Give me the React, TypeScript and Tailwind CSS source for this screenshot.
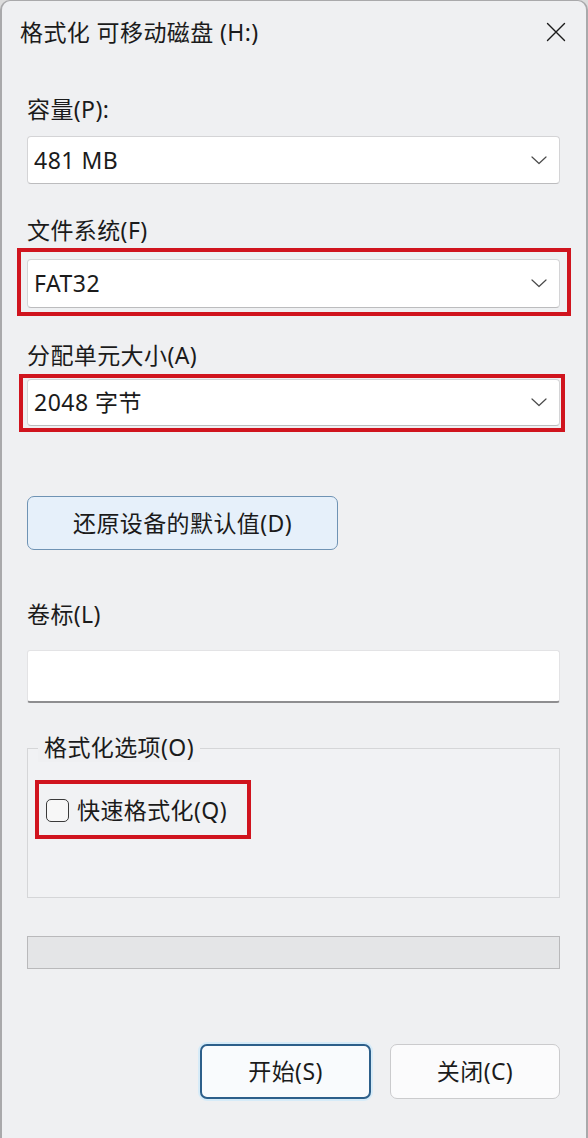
import React from 'react';

const font = "font-['Segoe_UI','Noto_Sans','Noto_Sans_CJK_SC',sans-serif]";

function Chevron() {
  return (
    <svg width="16" height="9" viewBox="0 0 16 9" fill="none" className="shrink-0">
      <path d="M1 1l7 6.5L15 1" stroke="#4a4a4a" strokeWidth="1.2" strokeLinecap="round" strokeLinejoin="round" />
    </svg>
  );
}

function Select({ value, h }: { value: string; h: string }) {
  return (
    <div className={`flex items-center justify-between ${h} rounded-[4px] border border-[#d4d4d6] border-b-[#bcbcbe] bg-white pl-[6px] pr-[12px]`}>
      <span className="text-[23px] tracking-[0.5px] text-[#1b1b1b]">{value}</span>
      <Chevron />
    </div>
  );
}

function Label({ children }: { children: React.ReactNode }) {
  return <div className="h-[30px] text-[23px] leading-[30px] tracking-[0.4px] text-[#1b1b1b]">{children}</div>;
}

export default function App() {
  return (
    <div className={`${font} h-[1138px] w-[588px] overflow-hidden bg-[#dcdcdc]`}>
      <div className="h-full rounded-t-[10px] border-l-2 border-r-2 border-t border-[#a9a9ab] bg-[#eff0f2]">
        {/* title bar */}
        <div className="flex h-[62px] items-center justify-between pl-[18px] pr-[20px]">
          <span className="text-[23px] tracking-[0.4px] text-[#1b1b1b]">格式化 可移动磁盘 (H:)</span>
          <svg width="20" height="20" viewBox="0 0 20 20" fill="none">
            <path d="M1.5 1.5l17 17M18.5 1.5l-17 17" stroke="#1b1b1b" strokeWidth="1.4" strokeLinecap="round" />
          </svg>
        </div>

        <div className="pl-[25px] pr-[26px]">
          <div className="mt-[31px]">
            <Label>容量(P):</Label>
          </div>
          <div className="mt-[12px]">
            <Select value="481 MB" h="h-[48px]" />
          </div>

          <div className="mt-[31px]">
            <Label>文件系统(F)</Label>
          </div>
          <div className="relative mt-[14px]">
            <Select value="FAT32" h="h-[49px]" />
            <div className="pointer-events-none absolute -bottom-[8px] -left-[10px] -right-[11px] -top-[11px] border-[4px] border-[#d0141e]" />
          </div>

          <div className="mt-[32px]">
            <Label>分配单元大小(A)</Label>
          </div>
          <div className="relative mt-[9px]">
            <Select value="2048 字节" h="h-[47px]" />
            <div className="pointer-events-none absolute -bottom-[6px] -left-[8px] -right-[5px] -top-[5px] border-[4px] border-[#d0141e]" />
          </div>

          <button className="mt-[70px] flex h-[54px] w-[311px] items-center justify-center rounded-[7px] border border-[#6f93b4] bg-[#e6f0fa] text-[23px] tracking-[0.4px] text-[#1b1b1b]">
            还原设备的默认值(D)
          </button>

          <div className="mt-[49px]">
            <Label>卷标(L)</Label>
          </div>
          <div className="mt-[21px] h-[53px] rounded-[3px] border border-[#e3e3e5] border-b-2 border-b-[#8e8e90] bg-white" />

          <div className="relative mt-[45px] h-[150px] border border-[#d5d6d8] bg-[#f1f2f4]">
            <span className="absolute -top-[17px] left-[10px] bg-[#eff0f2] px-[6px] text-[23px] leading-[30px] tracking-[0.4px] text-[#1b1b1b]">格式化选项(O)</span>
            <div className="relative ml-[18px] mt-[47px] flex items-center gap-[8px]">
              <span className="h-[23px] w-[23px] rounded-[5px] border-[1.5px] border-[#3a3a3a] bg-[#f7f7f7]" />
              <span className="text-[23px] leading-[28px] tracking-[0.4px] text-[#1b1b1b]">快速格式化(Q)</span>
              <div className="pointer-events-none absolute -bottom-[15px] -left-[11px] -top-[16px] w-[216px] border-[4px] border-[#d0141e]" />
            </div>
          </div>

          <div className="mt-[38px] h-[33px] border border-[#b9b9bb] bg-[#e4e5e7]" />

          <div className="mt-[75px] flex justify-end gap-[19px]">
            <button className="flex h-[55px] w-[171px] items-center justify-center rounded-[7px] border-2 border-[#2d5f8a] bg-[#f9fbfd] text-[23px] tracking-[0.4px] text-[#1b1b1b] shadow-[0_0_0_2px_#d6ebf8]">
              开始(S)
            </button>
            <button className="flex h-[55px] w-[170px] items-center justify-center rounded-[7px] border border-[#cbcbcd] bg-[#fbfbfc] text-[23px] tracking-[0.4px] text-[#1b1b1b]">
              关闭(C)
            </button>
          </div>
        </div>
      </div>
    </div>
  );
}
